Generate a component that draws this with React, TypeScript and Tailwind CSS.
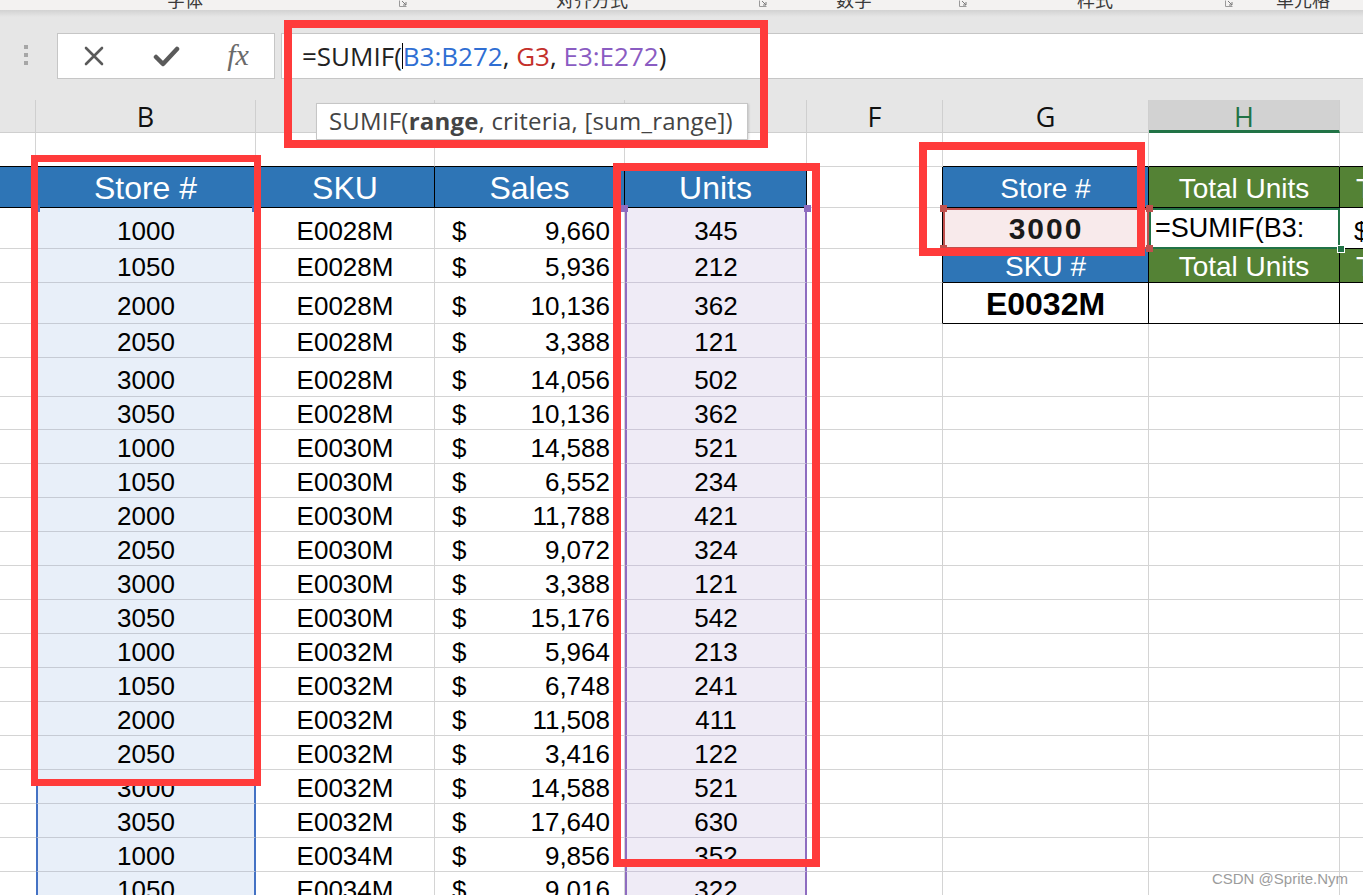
import React from 'react';

const COLS = 'grid grid-cols-[36px_220px_179px_190px_182px_136px_206px_191px_1fr]';

const rows: [string, string, string, string][] = [
  ['1000', 'E0028M', '9,660', '345'],
  ['1050', 'E0028M', '5,936', '212'],
  ['2000', 'E0028M', '10,136', '362'],
  ['2050', 'E0028M', '3,388', '121'],
  ['3000', 'E0028M', '14,056', '502'],
  ['3050', 'E0028M', '10,136', '362'],
  ['1000', 'E0030M', '14,588', '521'],
  ['1050', 'E0030M', '6,552', '234'],
  ['2000', 'E0030M', '11,788', '421'],
  ['2050', 'E0030M', '9,072', '324'],
  ['3000', 'E0030M', '3,388', '121'],
  ['3050', 'E0030M', '15,176', '542'],
  ['1000', 'E0032M', '5,964', '213'],
  ['1050', 'E0032M', '6,748', '241'],
  ['2000', 'E0032M', '11,508', '411'],
  ['2050', 'E0032M', '3,416', '122'],
  ['3000', 'E0032M', '14,588', '521'],
  ['3050', 'E0032M', '17,640', '630'],
  ['1000', 'E0034M', '9,856', '352'],
  ['1050', 'E0034M', '9,016', '322'],
];

// row heights and bottom padding of the text, rows 3..8 differ from the rest
const heights = ['h-[41px]', 'h-[34px]', 'h-[41px]', 'h-[34px]', 'h-[39px]', 'h-[33px]'];
const pads = ['pb-[4px]', 'pb-[2px]', 'pb-[4px]', 'pb-[2px]', 'pb-[3px]', 'pb-[2px]'];

const grid = 'border-r border-b border-[#d4d4d4]';

function Launcher() {
  return (
    <svg width="9" height="8" viewBox="0 0 9 8" className="shrink-0">
      <path d="M0.5 0.5v6h7" fill="none" stroke="#9a9a9a" strokeWidth="1" />
      <path d="M3 1l4 4M7 2v3H4" fill="none" stroke="#7a7a7a" strokeWidth="1" />
    </svg>
  );
}

function RightCells({ i }: { i: number }) {
  if (i === 0)
    return (
      <>
        <div className="flex items-end justify-center border-2 border-[#c0504d] bg-[#f8eaeb] pb-[3px] text-[30px] font-bold leading-none tracking-[2px] text-[#1a1a1a]">
          3000
        </div>
        <div className="flex items-end border-2 border-[#217346] bg-white pb-[5px] pl-[4px] text-[27px] leading-none">
          =SUMIF(B3:
        </div>
        <div className="flex items-end overflow-hidden border-b border-black bg-white pb-[4px] pl-[14px] text-[26px] leading-none">
          $
        </div>
      </>
    );
  if (i === 1)
    return (
      <>
        <div className="flex items-end justify-center border-r border-b border-black bg-[#2e75b6] pb-[1px] text-[28px] leading-none text-white">
          SKU #
        </div>
        <div className="flex items-end justify-center border-r border-b border-black bg-[#548235] pb-[1px] text-[28px] leading-none text-white">
          Total Units
        </div>
        <div className="flex items-end overflow-hidden whitespace-nowrap border-b border-black bg-[#548235] pb-[1px] pl-[16px] text-[28px] leading-none text-white">
          Total Units
        </div>
      </>
    );
  if (i === 2)
    return (
      <>
        <div className="flex items-end justify-center border-r border-b border-black pb-[3px] text-[32px] font-bold leading-none">
          E0032M
        </div>
        <div className="border-r border-b border-black" />
        <div className="border-b border-black" />
      </>
    );
  return (
    <>
      <div className={grid} />
      <div className={grid} />
      <div className="border-b border-[#d4d4d4]" />
    </>
  );
}

export default function App() {
  return (
    <div className="relative h-[895px] w-[1363px] overflow-hidden bg-white font-['Liberation_Sans',Arial,sans-serif] text-black">
      {/* ribbon bottom edge */}
      <div className="h-[10px] overflow-hidden bg-[#f3f2f1]">
        <div className="-mt-[12px] flex items-start text-[18px] leading-[22px] text-[#3a3a3a] font-['Noto_Sans_CJK_SC',sans-serif]">
          <span className="ml-[167px] w-[36px]">字体</span>
          <span className="ml-[196px] mt-[12px]"><Launcher /></span>
          <span className="ml-[148px] w-[72px]">对齐方式</span>
          <span className="ml-[131px] mt-[12px]"><Launcher /></span>
          <span className="ml-[68px] w-[36px]">数字</span>
          <span className="ml-[87px] mt-[12px]"><Launcher /></span>
          <span className="ml-[109px] w-[36px]">样式</span>
          <span className="ml-[112px] mt-[12px]"><Launcher /></span>
          <span className="ml-[42px] w-[54px]">单元格</span>
        </div>
      </div>

      {/* formula bar */}
      <div className="h-[90px] bg-[linear-gradient(#d2d2d2,#e6e6e6_7px)] pt-[23px]">
        <div className="flex h-[46px]">
          <div className="flex w-[57px] flex-col gap-[4px] pl-[24px] pt-[12px]">
            <div className="h-[4px] w-[4px] bg-[#a6a6a6]" />
            <div className="h-[4px] w-[4px] bg-[#a6a6a6]" />
            <div className="h-[4px] w-[4px] bg-[#a6a6a6]" />
          </div>
          <div className="flex w-[218px] border border-[#c6c6c6] bg-white">
            <div className="flex w-[72px] items-center justify-center">
              <svg width="22" height="22" viewBox="0 0 22 22">
                <path d="M3 3l16 16M19 3L3 19" stroke="#5a5a5a" strokeWidth="2.6" strokeLinecap="round" />
              </svg>
            </div>
            <div className="flex w-[72px] items-center justify-center">
              <svg width="27" height="21" viewBox="0 0 27 21">
                <path d="M3 11l7 7L24 3" fill="none" stroke="#5a5a5a" strokeWidth="4.5" strokeLinecap="round" strokeLinejoin="round" />
              </svg>
            </div>
            <div className="flex w-[72px] items-center justify-center pb-[2px] font-['Liberation_Serif',serif] text-[30px] italic leading-none text-[#6a6a6a]">
              fx
            </div>
          </div>
          <div className="w-[6px]" />
          <div className="flex flex-1 items-center border-y border-l border-[#c6c6c6] bg-white pl-[20px] font-['Open_Sans',sans-serif] text-[26px] leading-none text-[#222]">
            <span>=SUMIF(</span>
            <span className="inline-block h-[26px] w-px bg-black" />
            <span className="text-[#2f6ed3]">B3:B272</span>
            <span>,&nbsp;</span>
            <span className="text-[#c4302b]">G3</span>
            <span>,&nbsp;</span>
            <span className="text-[#8a5cc2]">E3:E272</span>
            <span>)</span>
          </div>
        </div>
      </div>

      {/* column letters (C, D, E sit under the tooltip) */}
      <div className={`${COLS} h-[33px] bg-[#e6e6e6] font-['Open_Sans',sans-serif] text-[27px] leading-none text-[#111]`}>
        <div className="border-r border-b border-[#cfcfcf]" />
        <div className="flex items-center justify-center border-r border-b border-[#cfcfcf]">B</div>
        <div className="border-r border-b border-[#cfcfcf]" />
        <div className="border-r border-b border-[#cfcfcf]" />
        <div className="border-r border-b border-[#cfcfcf]" />
        <div className="flex items-center justify-center border-r border-b border-[#cfcfcf]">F</div>
        <div className="flex items-center justify-center border-r border-b border-[#cfcfcf]">G</div>
        <div className="flex items-center justify-center border-r border-b-[3px] border-r-[#cfcfcf] border-b-[#217346] bg-[#d2d2d2] pt-[2px] text-[#217346]">H</div>
        <div className="border-b border-[#cfcfcf]" />
      </div>

      {/* row 1 */}
      <div className={`${COLS} h-[34px]`}>
        <div className="border-r border-b border-r-[#d4d4d4] border-b-black" />
        <div className="border-r border-b border-r-[#d4d4d4] border-b-black" />
        <div className="border-r border-b border-r-[#d4d4d4] border-b-black" />
        <div className="border-r border-b border-r-[#d4d4d4] border-b-black" />
        <div className="border-r border-b border-r-[#d4d4d4] border-b-black" />
        <div className={grid} />
        <div className="border-r border-b border-r-[#d4d4d4] border-b-black" />
        <div className="border-r border-b border-r-[#d4d4d4] border-b-black" />
        <div className="border-b border-black" />
      </div>

      {/* row 2: headers */}
      <div className={`${COLS} h-[41px] leading-none text-white`}>
        <div className="border-b border-black bg-[#2e75b6]" />
        <div className="flex items-end justify-center border-r border-b border-black bg-[#2e75b6] pb-[3px] text-[32px]">Store #</div>
        <div className="flex items-end justify-center border-r border-b border-black bg-[#2e75b6] pb-[3px] text-[32px]">SKU</div>
        <div className="flex items-end justify-center border-r border-b border-black bg-[#2e75b6] pb-[3px] text-[32px]">Sales</div>
        <div className="flex items-end justify-center border-r border-b border-black bg-[#2e75b6] pb-[3px] text-[32px]">Units</div>
        <div className="border-r border-b border-r-black border-b-[#d4d4d4] bg-white" />
        <div className="flex items-end justify-center border-r border-b border-black bg-[#2e75b6] pb-[4px] text-[28px]">Store #</div>
        <div className="flex items-end justify-center border-r border-b border-black bg-[#548235] pb-[4px] text-[28px]">Total Units</div>
        <div className="flex items-end overflow-hidden whitespace-nowrap border-b border-black bg-[#548235] pb-[4px] pl-[16px] text-[28px]">Total Units</div>
      </div>

      {/* data rows */}
      {rows.map(([store, sku, sales, units], i) => {
        const pb = pads[i] ?? 'pb-[2px]';
        return (
          <div key={i} className={`${COLS} ${heights[i] ?? 'h-[34px]'} text-[26px] leading-none`}>
            <div className="border-b border-[#d4d4d4]" />
            <div className={`flex items-end justify-center border-x-2 border-b border-[#4472c4] border-b-[#c6cbd5] bg-[#e8eff9] ${pb}`}>
              {store}
            </div>
            <div className={`flex items-end justify-center ${pb} ${grid}`}>{sku}</div>
            <div className={`flex items-end justify-between pl-[17px] pr-[14px] ${pb} ${grid}`}>
              <span>$</span>
              <span>{sales}</span>
            </div>
            <div className={`flex items-end justify-center border-x-2 border-b border-[#8e6cc0] border-b-[#cdc8d8] bg-[#efebf6] ${pb}`}>
              {units}
            </div>
            <div className={i < 3 ? 'border-r border-b border-r-black border-b-[#d4d4d4]' : grid} />
            <RightCells i={i} />
          </div>
        );
      })}

      {/* tooltip */}
      <div className="absolute left-[316px] top-[103px] flex h-[37px] w-[432px] items-center border border-[#c6c6c6] bg-white pb-[2px] pl-[12px] font-['Open_Sans',sans-serif] text-[24px] leading-none tracking-[0.2px] text-[#444] shadow-[1px_1px_2px_rgba(0,0,0,0.15)]">
        SUMIF(<span className="font-bold">range</span>, criteria, [sum_range])
      </div>

      {/* selection handles */}
      <div className="absolute left-[33px] top-[205px] h-[7px] w-[7px] border-2 border-[#4472c4] bg-white" />
      <div className="absolute left-[252px] top-[205px] h-[7px] w-[7px] border-2 border-[#4472c4] bg-white" />
      <div className="absolute left-[621px] top-[205px] h-[7px] w-[7px] bg-[#8e6cc0]" />
      <div className="absolute left-[804px] top-[205px] h-[7px] w-[7px] bg-[#8e6cc0]" />
      <div className="absolute left-[940px] top-[205px] h-[7px] w-[7px] bg-[#c0504d]" />
      <div className="absolute left-[940px] top-[245px] h-[7px] w-[7px] bg-[#c0504d]" />
      <div className="absolute left-[1146px] top-[205px] h-[7px] w-[7px] bg-[#c0504d]" />
      <div className="absolute left-[1146px] top-[245px] h-[7px] w-[7px] bg-[#c0504d]" />
      <div className="absolute left-[1337px] top-[245px] h-[8px] w-[8px] border border-white bg-[#217346]" />

      {/* red annotation boxes */}
      <div className="absolute left-[284px] top-[20px] h-[128px] w-[484px] border-[8px] border-[#ff3b3b]" />
      <div className="absolute left-[31px] top-[155px] h-[631px] w-[230px] border-[7px] border-[#ff3b3b]" />
      <div className="absolute left-[613px] top-[163px] h-[704px] w-[207px] border-[8px] border-[#ff3b3b]" />
      <div className="absolute left-[919px] top-[142px] h-[114px] w-[226px] border-[8px] border-[#ff3b3b]" />

      {/* watermark */}
      <div className="absolute bottom-[9px] right-[15px] text-[15px] leading-none text-[#9c9c9c]">CSDN @Sprite.Nym</div>
    </div>
  );
}
